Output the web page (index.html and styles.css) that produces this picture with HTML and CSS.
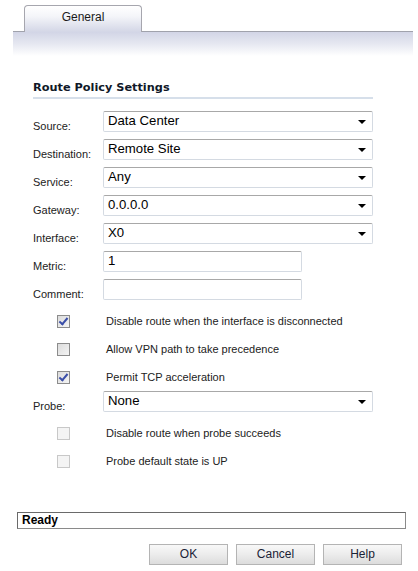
FILE: index.html
```html
<!DOCTYPE html>
<html>
<head>
<meta charset="utf-8">
<link rel="stylesheet" href="styles.css">
</head>
<body>
<div class="tabbar">
  <div class="tab">General</div>
</div>
<div class="band"></div>
<div class="form">
  <div class="heading">Route Policy Settings</div>
  <div class="row"><div class="label">Source:</div><div class="select">Data Center<span class="arrow"></span></div></div>
  <div class="row"><div class="label">Destination:</div><div class="select">Remote Site<span class="arrow"></span></div></div>
  <div class="row"><div class="label">Service:</div><div class="select">Any<span class="arrow"></span></div></div>
  <div class="row"><div class="label">Gateway:</div><div class="select">0.0.0.0<span class="arrow"></span></div></div>
  <div class="row"><div class="label">Interface:</div><div class="select">X0<span class="arrow"></span></div></div>
  <div class="row"><div class="label">Metric:</div><div class="input">1</div></div>
  <div class="row"><div class="label">Comment:</div><div class="input"></div></div>
  <div class="crow"><div class="cbcell"><span class="cb checked"></span></div><div class="ctext">Disable route when the interface is disconnected</div></div>
  <div class="crow"><div class="cbcell"><span class="cb"></span></div><div class="ctext">Allow VPN path to take precedence</div></div>
  <div class="crow"><div class="cbcell"><span class="cb checked"></span></div><div class="ctext">Permit TCP acceleration</div></div>
  <div class="row"><div class="label">Probe:</div><div class="select">None<span class="arrow"></span></div></div>
  <div class="crow"><div class="cbcell"><span class="cb disabled"></span></div><div class="ctext">Disable route when probe succeeds</div></div>
  <div class="crow"><div class="cbcell"><span class="cb disabled"></span></div><div class="ctext">Probe default state is UP</div></div>
</div>
<div class="status">Ready</div>
<div class="buttons">
  <div class="btn">OK</div>
  <div class="btn">Cancel</div>
  <div class="btn">Help</div>
</div>
</body>
</html>
```
FILE: styles.css
```css
html, body {
  margin: 0;
  padding: 0;
  background: #ffffff;
}
body {
  width: 418px;
  height: 571px;
  overflow: hidden;
  font-family: "Liberation Sans", Arial, sans-serif;
  color: #000;
}
.tabbar {
  height: 31px;
  padding-left: 24px;
  box-sizing: border-box;
  padding-top: 5px;
  position: relative;
  z-index: 1;
}
.tab {
  width: 118px;
  height: 27px;
  box-sizing: border-box;
  border: 1px solid #a6a6ae;
  border-bottom: none;
  border-radius: 4px 4px 0 0;
  background: linear-gradient(to bottom, #ffffff 0%, #f4f5f9 40%, #d3d6e6 100%);
  text-align: center;
  font-size: 12px;
  line-height: 22px;
  color: #1a1a1a;
}
.band {
  margin: 0 5px 0 13px;
  height: 24px;
  border-top: 1px solid #a0a2ac;
  background: linear-gradient(to bottom, #d2d5e6 0%, #e6e8f1 50%, #ffffff 100%);
}
.form {
  margin-left: 33px;
  width: 340px;
  padding-top: 25px;
}
.heading {
  font-family: "DejaVu Sans", Verdana, sans-serif;
  font-weight: bold;
  font-size: 11.3px;
  color: #101828;
  line-height: 14px;
  padding-bottom: 2px;
  border-bottom: 2px solid #d6dfea;
  margin-bottom: 12px;
}
.row {
  display: flex;
  align-items: flex-start;
  height: 28px;
}
.label {
  width: 70px;
  flex: none;
  font-size: 11px;
  line-height: 13px;
  color: #222;
  padding-top: 9px;
}
.select, .input {
  position: relative;
  height: 21px;
  box-sizing: border-box;
  border: 1px solid #d4dae2;
  border-top-color: #a8a8a8;
  border-radius: 2px;
  font-size: 13.2px;
  line-height: 17px;
  padding-left: 4px;
  color: #000;
}
.select {
  width: 270px;
}
.input {
  width: 199px;
}
.arrow {
  position: absolute;
  right: 6px;
  top: 8px;
  width: 0;
  height: 0;
  border-left: 4px solid transparent;
  border-right: 4px solid transparent;
  border-top: 4px solid #000;
}
.crow {
  display: flex;
  align-items: center;
  height: 28px;
  box-sizing: border-box;
  padding-top: 2px;
  padding-bottom: 1px;
}
.cbcell {
  width: 70px;
  flex: none;
  padding-left: 24px;
  box-sizing: border-box;
  display: flex;
}
.cb {
  position: relative;
  width: 13px;
  height: 13px;
  box-sizing: border-box;
  border: 1px solid #8c8c8c;
  background: linear-gradient(135deg, #dcdcdc 0%, #f4f4f4 100%);
  display: block;
}
.cb.disabled {
  border-color: #c8c8c8;
  background: #f4f4f4;
}
.cb.checked::after {
  content: "";
  position: absolute;
  left: 3px;
  top: 0px;
  width: 3px;
  height: 7px;
  border-right: 2px solid #3a4ea8;
  border-bottom: 2px solid #3a4ea8;
  transform: rotate(40deg);
}
.ctext {
  padding-left: 3px;
  font-size: 11px;
  line-height: 13px;
  color: #222;
}
.status {
  margin: 37px 12px 0 17px;
  height: 17px;
  box-sizing: border-box;
  border: 1px solid #8a8a8a;
  border-top-color: #6a6a6a;
  border-left-color: #6a6a6a;
  font-family: "Liberation Sans", Arial, sans-serif;
  font-weight: bold;
  font-size: 12px;
  line-height: 15px;
  padding-left: 4px;
}
.buttons {
  display: flex;
  gap: 8px;
  margin-left: 149px;
  margin-top: 15px;
}
.btn {
  width: 79px;
  height: 21px;
  box-sizing: border-box;
  border: 1px solid #b4b4b4;
  background: linear-gradient(to bottom, #f8f8f8 0%, #ececec 50%, #dcdcdc 100%);
  text-align: center;
  font-size: 12px;
  line-height: 19px;
  color: #1a2236;
}
```
